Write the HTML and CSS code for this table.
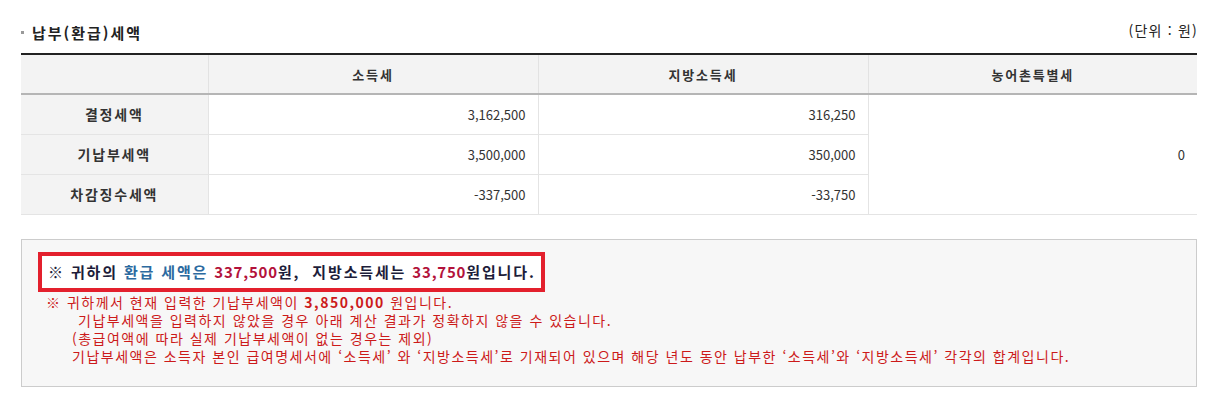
FILE: index.html
```html
<!DOCTYPE html>
<html lang="ko">
<head>
<meta charset="utf-8">
<link rel="stylesheet" href="styles.css">
</head>
<body>
<div class="wrap">
  <div class="title-row">
    <h2 class="title"><span class="dot"></span>납부(환급)세액</h2>
    <span class="unit">(단위 : 원)</span>
  </div>
  <table class="tax">
    <colgroup>
      <col class="c1"><col class="c2"><col class="c3"><col class="c4">
    </colgroup>
    <thead>
      <tr><th></th><th>소득세</th><th>지방소득세</th><th>농어촌특별세</th></tr>
    </thead>
    <tbody>
      <tr><th>결정세액</th><td>3,162,500</td><td>316,250</td><td rowspan="3">0</td></tr>
      <tr><th>기납부세액</th><td>3,500,000</td><td>350,000</td></tr>
      <tr><th>차감징수세액</th><td>-337,500</td><td>-33,750</td></tr>
    </tbody>
  </table>
  <div class="result">
    <div class="highlight"><span class="hl-text">※ 귀하의 <span class="blue">환급 세액은</span> <span class="num">337,500</span>원, &nbsp;지방소득세는 <span class="num">33,750</span>원입니다.</span></div>
    <div class="notes">
      <p class="n1">※ 귀하께서 현재 입력한 기납부세액이 <b>3,850,000</b> 원입니다.</p>
      <p class="n2">기납부세액을 입력하지 않았을 경우 아래 계산 결과가 정확하지 않을 수 있습니다.</p>
      <p class="n3">(총급여액에 따라 실제 기납부세액이 없는 경우는 제외)</p>
      <p class="n3">기납부세액은 소득자 본인 급여명세서에 ‘소득세’ 와 ‘지방소득세’로 기재되어 있으며 해당 년도 동안 납부한 ‘소득세’와 ‘지방소득세’ 각각의 합계입니다.</p>
    </div>
  </div>
</div>
</body>
</html>
```

FILE: styles.css
```css
* { box-sizing: border-box; }
html, body { margin: 0; padding: 0; background: #fff; }
body {
  font-family: "Noto Sans CJK KR", "Noto Sans", sans-serif;
  color: #333;
  font-size: 13px;
}
.wrap {
  width: 1176px;
  margin-left: 21px;
}
.title-row {
  display: flex;
  justify-content: space-between;
  align-items: center;
  height: 20px;
  margin-top: 22px;
}
.title {
  margin: 0;
  font-size: 15px;
  font-weight: 700;
  color: #222;
  display: flex;
  align-items: center;
  letter-spacing: 2px;
}
.dot {
  display: inline-block;
  width: 3px;
  height: 3px;
  background: #999;
  margin-right: 8px;
}
.unit {
  font-size: 14px;
  letter-spacing: 1.2px;
  color: #222;
  margin-top: -4px;
  margin-right: -1px;
}
.tax {
  width: 1176px;
  margin-top: 11px;
  border-collapse: collapse;
  table-layout: fixed;
  border-top: 2px solid #222;
}
.c1 { width: 187px; }
.c2 { width: 330px; }
.c3 { width: 330px; }
.c4 { width: 329px; }
.tax thead th {
  height: 40px;
  background: #f3f3f3;
  border-bottom: 2px solid #b5b5b5;
  border-left: 1px solid #e2e2e2;
  font-weight: 700;
  font-size: 13px;
  letter-spacing: 1.8px;
  color: #333;
  text-align: center;
}
.tax thead th:first-child { border-left: none; }
.tax tbody th {
  height: 40px;
  background: #f3f3f3;
  font-weight: 700;
  font-size: 14px;
  letter-spacing: 1.8px;
  color: #333;
  text-align: center;
  border-bottom: 1px solid #e4e4e4;
}
.tax tbody td {
  height: 40px;
  text-align: right;
  padding-right: 12px;
  border-bottom: 1px solid #e4e4e4;
  border-left: 1px solid #e4e4e4;
  font-size: 13px;
  color: #333;
}
.result {
  margin-top: 24px;
  border: 1px solid #cccccc;
  background: #f7f7f7;
  padding: 12px 16px 20px 16px;
}
.highlight {
  width: 507px;
  height: 40px;
  border: 4px solid #e3202d;
  background: #fff;
  padding-left: 6px;
  display: flex;
  align-items: center;
  font-size: 15px;
  font-weight: 700;
  letter-spacing: 1.85px;
  color: #1d1d3a;
  white-space: nowrap;
}
.blue { color: #2c6aa0; }
.num { color: #b3123b; letter-spacing: 0.8px; }
.notes {
  color: #cc1a1a;
  font-size: 14px;
  letter-spacing: 1.5px;
  line-height: 18.3px;
  padding-top: 1px;
}
.notes p { margin: 0; white-space: nowrap; }
.notes b { font-weight: 700; }
.n1 { padding-left: 8px; }
.n2 { padding-left: 40px; }
.n3 { padding-left: 34px; }
```
